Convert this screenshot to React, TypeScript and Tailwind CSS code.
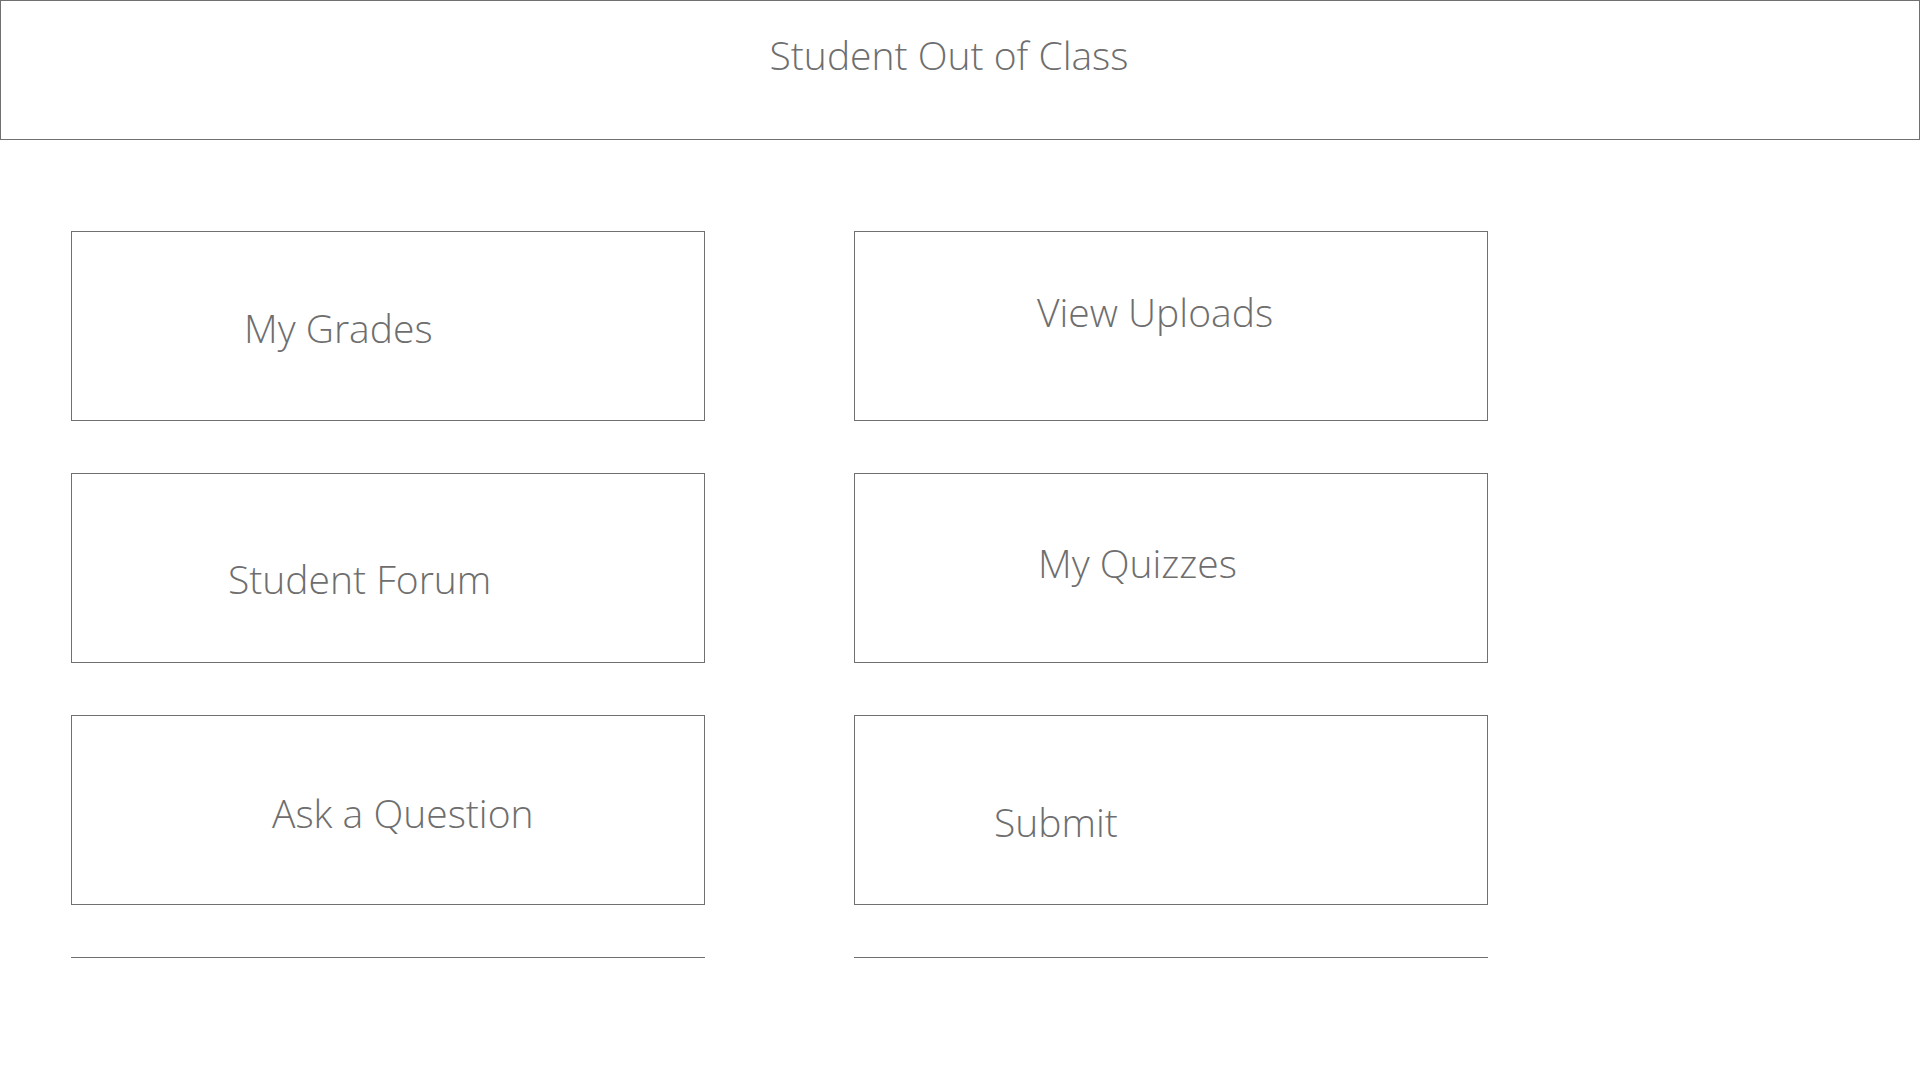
const cards = [
  { label: "My Grades", pad: "pl-[172px] pt-[76px]" },
  { label: "View Uploads", pad: "pl-[182px] pt-[60px]" },
  { label: "Student Forum", pad: "pl-[156px] pt-[85px]" },
  { label: "My Quizzes", pad: "pl-[183px] pt-[69px]" },
  { label: "Ask a Question", pad: "pl-[200px] pt-[77px]" },
  { label: "Submit", pad: "pl-[139px] pt-[86px]" },
];

export default function App() {
  return (
    <div className="min-h-screen w-full bg-white text-[#6e6e6e] font-['Open_Sans','Noto_Sans',sans-serif] font-[350]">
      <header className="h-[140px] border border-[#707070] flex justify-center pt-[34px] pr-[22px]">
        <h1 className="text-[39px] leading-[39px]">Student Out of Class</h1>
      </header>

      <main className="pl-[71px] pt-[91px]">
        <div className="grid grid-cols-[634px_634px] gap-x-[149px] gap-y-[52px]">
          {cards.map((c) => (
            <div
              key={c.label}
              className={`h-[190px] border border-[#707070] ${c.pad}`}
            >
              <p className="text-[39px] leading-[39px] whitespace-nowrap">{c.label}</p>
            </div>
          ))}
          <div className="h-px bg-[#707070]" />
          <div className="h-px bg-[#707070]" />
        </div>
      </main>
    </div>
  );
}
